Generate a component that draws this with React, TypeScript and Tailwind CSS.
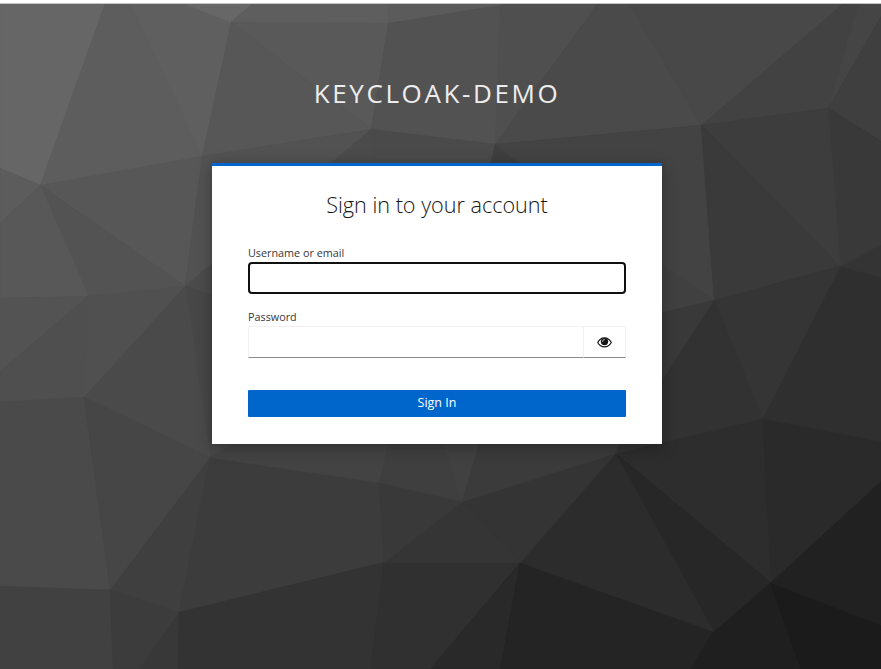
const facets: [string, string][] = [
  ['0,0 106,0 40,185 0,168', '#666666'],
  ['106,0 129,0 202,156 40,185', '#5d5d5d'],
  ['129,0 176,0 231,22 202,156', '#5f5f5f'],
  ['176,0 256,0 231,22', '#676767'],
  ['256,0 388,0 388,23 231,22', '#5e5e5e'],
  ['231,22 388,23 371,129', '#595959'],
  ['231,22 371,129 371,129 202,156', '#575757'],
  ['388,0 520,0 500,5 388,23', '#5b5b5b'],
  ['388,23 500,5 495,144 371,129', '#525252'],
  ['500,5 520,0 600,0 495,144', '#4f4f4f'],
  ['600,0 627,0 701,125 495,144', '#4a4a4a'],
  ['627,0 847,0 701,125', '#484848'],
  ['847,0 859,0 828,108 701,125', '#424242'],
  ['859,0 890,0 881,18 828,108', '#454545'],
  ['890,0 881,18 890,146 881,141 828,108', '#3f3f3f'],
  ['0,168 40,185 0,223', '#5c5c5c'],
  ['40,185 202,156 185,286', '#575757'],
  ['40,185 185,286 88,296', '#535353'],
  ['40,185 88,296 0,298 0,223', '#585858'],
  ['202,156 371,129 185,286', '#525252'],
  ['185,286 371,129 377,163 377,360', '#4b4b4b'],
  ['371,129 495,144 487,180 377,180', '#4a4a4a'],
  ['495,144 487,180 540,180', '#3f3f3f'],
  ['495,144 701,125 714,300 540,180', '#434343'],
  ['185,286 377,350 233,444 210,457', '#474747'],
  ['88,296 0,298 0,371', '#535353'],
  ['88,296 0,371 0,402 84,397', '#4f4f4f'],
  ['88,296 185,286 84,397', '#505050'],
  ['185,286 84,397 210,457', '#4a4a4a'],
  ['84,397 0,402 0,586 110,590', '#4a4a4a'],
  ['84,397 210,457 110,590', '#464646'],
  ['110,590 210,457 179,612', '#3f3f3f'],
  ['210,457 379,482 384,562 179,612', '#3c3c3c'],
  ['110,590 0,586 0,669 113,669', '#414141'],
  ['110,590 179,612 139,669 113,669', '#3c3c3c'],
  ['179,612 139,669 178,669', '#383838'],
  ['179,612 384,562 370,669 178,669', '#333333'],
  ['384,562 520,562 430,669 370,669', '#303030'],
  ['520,562 430,669 500,669', '#292929'],
  ['520,562 500,669 690,669 713,631', '#242424'],
  ['713,631 690,669 801,669 770,582', '#1f1f1f'],
  ['770,582 881,625 881,669 801,669', '#1b1b1b'],
  ['770,582 881,480 881,625', '#212121'],
  ['770,582 762,418 881,441 881,480', '#2a2a2a'],
  ['615,453 762,418 770,582', '#2d2d2d'],
  ['615,453 770,582 713,631', '#272727'],
  ['615,453 713,631 520,562', '#2c2c2c'],
  ['462,501 615,453 520,562', '#343434'],
  ['384,562 462,501 520,562', '#353535'],
  ['379,482 462,501 384,562', '#393939'],
  ['210,457 240,440 389,440 379,482', '#434343'],
  ['379,482 389,440 442,440 462,501', '#3f3f3f'],
  ['442,440 480,440 462,501', '#414141'],
  ['462,501 480,440 623,440 615,453', '#3b3b3b'],
  ['762,418 840,266 881,277 881,441', '#2f2f2f'],
  ['840,266 881,244 881,277', '#343434'],
  ['828,108 840,266 881,244 881,141', '#393939'],
  ['701,125 828,108 840,266', '#3d3d3d'],
  ['701,125 840,266 714,300', '#3a3a3a'],
  ['714,300 840,266 762,418', '#353535'],
  ['714,300 655,259 655,314', '#404040'],
  ['714,300 655,314 615,453', '#393939'],
  ['714,300 762,418 615,453', '#323232'],
]

function Backdrop() {
  return (
    <svg viewBox="0 0 881 669" className="col-start-1 row-start-1 h-[669px] w-[881px]" aria-hidden="true">
      <rect width="881" height="669" fill="#444444" />
      <g transform="translate(0.4 0.4)">
        {facets.map(([points, color]) => (
          <polygon key={points} points={points} fill={color} stroke={color} strokeWidth="1" />
        ))}
      </g>
      <rect width="881" height="3" fill="#ffffff" />
      <rect y="3" width="881" height="1" fill="#c4c4c4" />
    </svg>
  )
}

function EyeIcon() {
  return (
    <svg viewBox="0 0 15 11" className="h-[11px] w-[15px]" aria-hidden="true">
      <path d="M.7 5.5C2.4 2.4 4.7.9 7.5.9s5.100 1.500 6.800 4.600c-1.700 3.100-4 4.400-6.800 4.400S2.400 8.600.7 5.500Z" fill="none" stroke="#151515" strokeWidth="1.100" />
      <circle cx="7.500" cy="4.600" r="3.700" fill="#151515" />
      <path d="M5.500 4.400c0-1 .7-1.800 1.800-1.800" fill="none" stroke="#ffffff" strokeWidth=".8" strokeLinecap="round" />
    </svg>
  )
}

export default function App() {
  return (
    <div className="grid h-[669px] w-[881px] overflow-hidden font-['Open_Sans',sans-serif]">
      <Backdrop />
      <main className="z-10 col-start-1 row-start-1 flex flex-col pl-[212px]">
        <h1 className="mt-[75px] h-[88px] w-[450px] text-center text-[26px] leading-[36px] tracking-[2.6px] whitespace-nowrap text-[#ededed]">
          KEYCLOAK-DEMO
        </h1>
        <section className="h-[281px] w-[450px] border-t-3 border-[#0066cc] bg-white px-9 shadow-[0_4px_16px_rgba(3,3,3,0.24),0_0_6px_rgba(3,3,3,0.1)]">
          <h2 className="pt-[22px] text-center text-[21.6px] leading-[34px] font-light text-[#151515]">Sign in to your account</h2>
          <form className="flex flex-col pt-[22px]" onSubmit={(e) => e.preventDefault()}>
            <label htmlFor="username" className="h-[18px] text-[10.8px] leading-[18px] text-[#363636]">
              Username or email
            </label>
            <input id="username" className="h-8 rounded-[4px] border-2 border-[#101010] bg-white px-2 text-sm outline-none" />
            <label htmlFor="password" className="mt-[14px] h-[18px] text-[10.8px] leading-[18px] text-[#363636]">
              Password
            </label>
            <div className="flex h-8">
              <input
                id="password"
                type="password"
                className="min-w-0 flex-1 border border-[#f0f0f0] border-b-[#8a8d90] border-r-0 bg-white px-2 text-sm outline-none"
              />
              <button
                type="button"
                aria-label="Show password"
                className="flex w-[43px] items-center justify-center border border-[#f0f0f0] border-b-[#8a8d90]"
              >
                <EyeIcon />
              </button>
            </div>
            <button type="submit" className="mt-8 h-[27px] rounded-[1px] bg-[#0066cc] pb-[2px] text-[12.5px] leading-[25px] text-white">
              Sign In
            </button>
          </form>
        </section>
      </main>
    </div>
  )
}
